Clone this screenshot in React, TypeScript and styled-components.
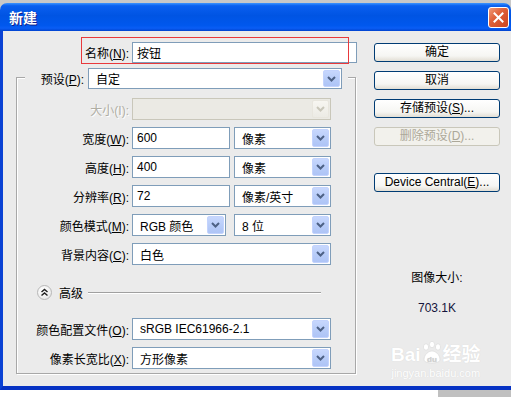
import React from 'react'
import styled, { createGlobalStyle } from 'styled-components'

const GlobalStyle = createGlobalStyle`
  html, body {
    margin: 0;
    padding: 0;
    background: #ffffff;
  }
  body {
    font-family: "Liberation Sans", "Noto Sans CJK SC", sans-serif;
    font-size: 12px;
    color: #000;
  }
`

const Desktop = styled.div`
  width: 511px;
  height: 397px;
  overflow: hidden;
  background: #c8c8c8;
  padding-top: 3px;
  box-sizing: border-box;
`

const Window = styled.div`
  width: 511px;
  display: flex;
  flex-direction: column;
`

const TitleBar = styled.div`
  height: 28px;
  border-radius: 7px 7px 0 0;
  background: linear-gradient(to bottom, #3d95ff 0%, #0a5fef 10%, #0054e3 45%, #0058ee 80%, #0a5df5 90%, #0043cf 100%);
  display: flex;
  align-items: center;
  justify-content: space-between;
  padding: 0 2px 0 9px;
`

const Title = styled.span`
  color: #fff;
  font-family: "Noto Sans CJK SC", sans-serif;
  font-weight: bold;
  font-size: 14px;
  text-shadow: 1px 1px 0 #0f1f8a;
`

const CloseButton = styled.div`
  width: 19px;
  height: 19px;
  margin-top: 1px;
  border: 1px solid #ffffff;
  border-radius: 3px;
  background: linear-gradient(135deg, #f09a78 0%, #e0623a 40%, #cc4520 100%);
  display: flex;
  align-items: center;
  justify-content: center;
`

const Frame = styled.div`
  height: 355px;
  border-left: 3px solid #0b42d4;
  border-bottom: 4px solid #0632c4;
  background: #ebebeb;
  display: flex;
  position: relative;
`

const LeftCol = styled.div`
  width: 340px;
  padding: 11px 0 0 13px;
  display: flex;
  flex-direction: column;
`

const RightCol = styled.div`
  width: 126px;
  margin-left: 18px;
  padding-top: 12px;
  display: flex;
  flex-direction: column;
  align-items: center;
  gap: 9px;
`

const FieldRow = styled.div<{ $label: number }>`
  display: grid;
  grid-template-columns: ${p => p.$label}px auto;
  column-gap: 3px;
  align-items: center;
`

const Label = styled.label<{ $disabled?: boolean }>`
  text-align: right;
  white-space: nowrap;
  color: ${p => (p.$disabled ? '#b0aea4' : '#000')};
  text-shadow: ${p => (p.$disabled ? '1px 1px 0 #fff' : 'none')};
`

const Controls = styled.div<{ $gap?: number }>`
  display: flex;
  gap: ${p => p.$gap ?? 4}px;
`

const TextInput = styled.div<{ $w: number; $h?: number }>`
  width: ${p => p.$w}px;
  height: ${p => p.$h ?? 22}px;
  box-sizing: border-box;
  border: 1px solid #7f9db9;
  background: #fff;
  padding-left: 4px;
  font-size: 12px;
  display: flex;
  align-items: center;
`

const SelectBox = styled.div<{ $w: number; $h?: number; $disabled?: boolean }>`
  width: ${p => p.$w}px;
  height: ${p => p.$h ?? 22}px;
  box-sizing: border-box;
  border: 1px solid ${p => (p.$disabled ? '#c9c7ba' : '#7f9db9')};
  background: ${p => (p.$disabled ? '#ebeae4' : '#fff')};
  display: flex;
  align-items: center;
  justify-content: space-between;
  padding: 1px 1px 1px 7px;
`

const DropButton = styled.div<{ $disabled?: boolean }>`
  width: 17px;
  align-self: stretch;
  box-sizing: border-box;
  border-radius: 2px;
  border: 1px solid ${p => (p.$disabled ? '#e8e6de' : '#c3d3fd')};
  background: ${p =>
    p.$disabled
      ? 'linear-gradient(to bottom, #f7f6f1, #ecebe5)'
      : 'linear-gradient(to bottom, #c7d7fd, #b6cbf8 60%, #aec4f6)'};
  display: flex;
  align-items: center;
  justify-content: center;
`

const GroupBox = styled.div`
  margin-top: 14px;
  width: 340px;
  box-sizing: border-box;
  border: 1px solid #a8a8a8;
  box-shadow: 1px 1px 0 #fff, inset 1px 1px 0 #fff;
  display: flex;
  flex-direction: column;
  gap: 7px;
  padding-bottom: 4px;
`

const Legend = styled.div`
  align-self: flex-start;
  margin: -10px 0 2px 8px;
  padding: 0 6px 0 12px;
  background: #ebebeb;
  display: flex;
  align-items: center;
  gap: 4px;
`

const LegendLabel = styled.span`
  width: 47px;
  text-align: right;
  white-space: nowrap;
`

const AdvancedRow = styled.div`
  display: flex;
  align-items: center;
  height: 16px;
  margin: 12px 0 11px 20px;
`

const RoundToggle = styled.div`
  width: 15px;
  height: 15px;
  box-sizing: border-box;
  border-radius: 50%;
  border: 1px solid #b8b8b8;
  background: radial-gradient(circle at 40% 35%, #ffffff 0%, #f0f0f0 60%, #d8d8d8 100%);
  display: flex;
  align-items: center;
  justify-content: center;
`

const AdvancedText = styled.span`
  margin-left: 7px;
`

const Rule = styled.div`
  width: 233px;
  height: 1px;
  margin-left: 5px;
  background: #a0a0a0;
  box-shadow: 0 1px 0 #fff;
`

const Button = styled.button`
  width: 126px;
  height: 19px;
  box-sizing: border-box;
  padding: 0;
  border: 1px solid #003c74;
  border-radius: 3px;
  background: linear-gradient(to bottom, #ffffff 0%, #f6f6f3 70%, #e2ded4 100%);
  font-family: "Liberation Sans", "Noto Sans CJK SC", sans-serif;
  font-size: 12px;
  color: #000;
  line-height: 17px;

  &:disabled {
    border-color: #c9c7ba;
    background: #f2f1ec;
    color: #aca899;
  }
`

const DeviceButton = styled(Button)`
  margin-top: 18px;
`

const SizeTitle = styled.div`
  margin-top: 67px;
  font-size: 12px;
`

const SizeValue = styled.div`
  margin-top: 7px;
  font-size: 12px;
  color: #14143c;
`

const Annotation = styled.div`
  position: absolute;
  left: 78px;
  top: 6px;
  width: 268px;
  height: 27px;
  box-sizing: border-box;
  border: 1px solid #e8393c;
  pointer-events: none;
`

const Watermark = styled.div`
  position: absolute;
  left: 388px;
  top: 310px;
  display: flex;
  flex-direction: column;
  align-items: center;
  color: #ffffff;
  text-shadow: 0 0 1px #d2d2d2;
  pointer-events: none;
`

const MarkMain = styled.div`
  display: flex;
  align-items: flex-end;
  font-family: "Liberation Sans", "Noto Sans CJK SC", sans-serif;
  font-weight: bold;
  font-size: 19px;
  line-height: 20px;
`

const MarkSub = styled.div`
  font-size: 11px;
  margin-top: 2px;
`

const BottomStrip = styled.div`
  display: flex;
  height: 7px;
  > div:first-child { width: 438px; background: #ffffff; }
  > div:last-child { flex: 1; background: #c0c0c0; }
`

const Chevron = ({ color }: { color: string }) => (
  <svg width="9" height="6" viewBox="0 0 9 6">
    <path d="M1 1 L4.5 4.5 L8 1" fill="none" stroke={color} strokeWidth="2" />
  </svg>
)

const Select = ({ w, h, value, disabled }: { w: number; h?: number; value?: string; disabled?: boolean }) => (
  <SelectBox $w={w} $h={h} $disabled={disabled}>
    <span>{value}</span>
    <DropButton $disabled={disabled}>
      <Chevron color={disabled ? '#c9c7ba' : '#4d6185'} />
    </DropButton>
  </SelectBox>
)

const Mn = ({ text, k }: { text: string; k: string }) => (
  <>
    {text}(<u>{k}</u>):
  </>
)

export default function App() {
  return (
    <Desktop>
      <GlobalStyle />
      <Window>
        <TitleBar>
          <Title>新建</Title>
          <CloseButton>
            <svg width="11" height="11" viewBox="0 0 11 11">
              <path d="M1.5 1.5 L9.5 9.5 M9.5 1.5 L1.5 9.5" stroke="#fff" strokeWidth="2" strokeLinecap="square" />
            </svg>
          </CloseButton>
        </TitleBar>
        <Frame>
          <LeftCol>
            <FieldRow $label={113}>
              <Label><Mn text="名称" k="N" /></Label>
              <TextInput $w={225} $h={21}>按钮</TextInput>
            </FieldRow>

            <GroupBox>
              <Legend>
                <LegendLabel><Mn text="预设" k="P" /></LegendLabel>
                <Select w={254} h={21} value="自定" />
              </Legend>

              <FieldRow $label={112}>
                <Label $disabled>大小(I):</Label>
                <Select w={199} disabled />
              </FieldRow>
              <FieldRow $label={112}>
                <Label><Mn text="宽度" k="W" /></Label>
                <Controls>
                  <TextInput $w={98}>600</TextInput>
                  <Select w={97} value="像素" />
                </Controls>
              </FieldRow>
              <FieldRow $label={112}>
                <Label><Mn text="高度" k="H" /></Label>
                <Controls>
                  <TextInput $w={98}>400</TextInput>
                  <Select w={97} value="像素" />
                </Controls>
              </FieldRow>
              <FieldRow $label={112}>
                <Label><Mn text="分辨率" k="R" /></Label>
                <Controls>
                  <TextInput $w={98}>72</TextInput>
                  <Select w={97} value="像素/英寸" />
                </Controls>
              </FieldRow>
              <FieldRow $label={112}>
                <Label><Mn text="颜色模式" k="M" /></Label>
                <Controls $gap={8}>
                  <Select w={94} value="RGB 颜色" />
                  <Select w={97} value="8 位" />
                </Controls>
              </FieldRow>
              <FieldRow $label={112}>
                <Label><Mn text="背景内容" k="C" /></Label>
                <Select w={199} value="白色" />
              </FieldRow>

              <AdvancedRow>
                <RoundToggle>
                  <svg width="9" height="9" viewBox="0 0 9 9">
                    <path d="M1.5 4 L4.5 1.5 L7.5 4 M1.5 7.5 L4.5 5 L7.5 7.5" fill="none" stroke="#222" strokeWidth="1.5" />
                  </svg>
                </RoundToggle>
                <AdvancedText>高级</AdvancedText>
                <Rule />
              </AdvancedRow>

              <FieldRow $label={112}>
                <Label><Mn text="颜色配置文件" k="O" /></Label>
                <Select w={199} value="sRGB IEC61966-2.1" />
              </FieldRow>
              <FieldRow $label={112}>
                <Label><Mn text="像素长宽比" k="X" /></Label>
                <Select w={199} value="方形像素" />
              </FieldRow>
            </GroupBox>
          </LeftCol>

          <RightCol>
            <Button>确定</Button>
            <Button>取消</Button>
            <Button>存储预设(<u>S</u>)...</Button>
            <Button disabled>删除预设(<u>D</u>)...</Button>
            <DeviceButton>Device Central(<u>E</u>)...</DeviceButton>
            <SizeTitle>图像大小:</SizeTitle>
            <SizeValue>703.1K</SizeValue>
          </RightCol>

          <Annotation />
          <Watermark>
            <MarkMain>
              <span>Bai</span>
              <svg width="22" height="24" viewBox="0 0 22 24">
                <g fill="#fff" stroke="#d6d6d6" strokeWidth="0.6">
                  <ellipse cx="5" cy="6" rx="2.6" ry="3.2" />
                  <ellipse cx="11" cy="3.5" rx="2.6" ry="3.2" />
                  <ellipse cx="17" cy="6" rx="2.6" ry="3.2" />
                  <path d="M3 19 C3 13 8 10 11 10 C14 10 19 13 19 19 C19 23 3 23 3 19 Z" />
                </g>
                <text x="11" y="21" textAnchor="middle" fontSize="8" fill="#d0d0d0" fontFamily="Liberation Sans">du</text>
              </svg>
              <span>经验</span>
            </MarkMain>
            <MarkSub>jingyan.baidu.com</MarkSub>
          </Watermark>
        </Frame>
      </Window>
      <BottomStrip>
        <div />
        <div />
      </BottomStrip>
    </Desktop>
  )
}
